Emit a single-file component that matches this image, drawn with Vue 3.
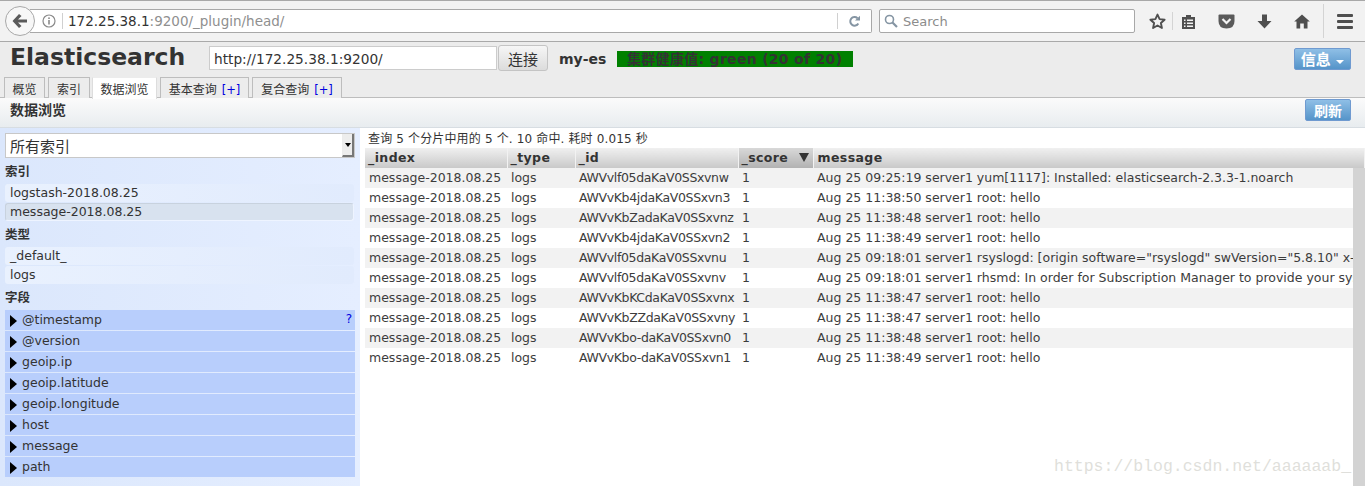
<script setup>
const tabs = [
  { label: '概览', w: 41 },
  { label: '索引', w: 42 },
  { label: '数据浏览', w: 65, active: true },
  { label: '基本查询', plus: true, w: 89 },
  { label: '复合查询', plus: true, w: 90 }
]
const fields = ['@timestamp', '@version', 'geoip.ip', 'geoip.latitude', 'geoip.longitude', 'host', 'message', 'path']
const rows = [
  ['AWVvlf05daKaV0SSxvnw', 'Aug 25 09:25:19 server1 yum[1117]: Installed: elasticsearch-2.3.3-1.noarch'],
  ['AWVvKb4jdaKaV0SSxvn3', 'Aug 25 11:38:50 server1 root: hello'],
  ['AWVvKbZadaKaV0SSxvnz', 'Aug 25 11:38:48 server1 root: hello'],
  ['AWVvKb4jdaKaV0SSxvn2', 'Aug 25 11:38:49 server1 root: hello'],
  ['AWVvlf05daKaV0SSxvnu', 'Aug 25 09:18:01 server1 rsyslogd: [origin software="rsyslogd" swVersion="5.8.10" x-pid="1117" x-info="http://www.rsyslog.com"] start'],
  ['AWVvlf05daKaV0SSxvnv', 'Aug 25 09:18:01 server1 rhsmd: In order for Subscription Manager to provide your system with updates'],
  ['AWVvKbKCdaKaV0SSxvnx', 'Aug 25 11:38:47 server1 root: hello'],
  ['AWVvKbZZdaKaV0SSxvny', 'Aug 25 11:38:47 server1 root: hello'],
  ['AWVvKbo-daKaV0SSxvn0', 'Aug 25 11:38:48 server1 root: hello'],
  ['AWVvKbo-daKaV0SSxvn1', 'Aug 25 11:38:49 server1 root: hello']
]
</script>

<template>
  <div class="page">
    <div class="chrome">
      <div class="back">
        <svg width="20" height="20" viewBox="0 0 20 20"><path d="M9 3 L2.5 10 L9 17 L11.5 15 L8 11.6 H17 V8.4 H8 L11.5 5 Z" fill="#5a5a5a"/></svg>
      </div>
      <div class="urlbar">
        <svg class="info" width="14" height="14" viewBox="0 0 14 14"><circle cx="7" cy="7" r="6" fill="none" stroke="#8a8a8a" stroke-width="1.2"/><rect x="6.2" y="6" width="1.6" height="4.5" fill="#8a8a8a"/><rect x="6.2" y="3.4" width="1.6" height="1.6" fill="#8a8a8a"/></svg>
        <span class="sep"></span>
        <span class="url"><span class="host">172.25.38.1</span>:9200/_plugin/head/</span>
        <span class="sep reload-sep"></span>
        <svg class="reload" width="13" height="13" viewBox="0 0 13 13"><path d="M10.3 8.5 A4.3 4.3 0 1 1 9.5 3.2" fill="none" stroke="#8595a3" stroke-width="2"/><path d="M7 5.5 H12 V0.8 Z" fill="#8595a3"/></svg>
      </div>
      <div class="searchbar">
        <svg width="14" height="14" viewBox="0 0 14 14"><circle cx="5.5" cy="5.5" r="4" fill="none" stroke="#8595a3" stroke-width="1.6"/><path d="M8.5 8.5 L13 13" stroke="#8595a3" stroke-width="2.2"/></svg>
        <span>Search</span>
      </div>
      <div class="tools">
        <svg class="t-star" width="17" height="17" viewBox="0 0 17 17"><path d="M8.5 1.6 L10.6 6.1 L15.6 6.7 L11.9 10 L12.9 15 L8.5 12.5 L4.1 15 L5.1 10 L1.4 6.7 L6.4 6.1 Z" fill="none" stroke="#4f4f4f" stroke-width="1.9" stroke-linejoin="round"/></svg>
        <span class="tool-sep"></span>
        <svg class="t-list" width="15" height="16" viewBox="0 0 15 16"><path d="M1 3 H5 V1 H10 V3 H14 V15 H1 Z" fill="#4f4f4f"/><path d="M3 5.5 H4.5 V7 H3 Z M6 5.5 H12 V7 H6 Z M3 8.5 H4.5 V10 H3 Z M6 8.5 H12 V10 H6 Z M3 11.5 H4.5 V13 H3 Z M6 11.5 H12 V13 H6 Z" fill="#f2f2f2"/></svg>
        <svg class="t-pocket" width="17" height="15" viewBox="0 0 17 15"><path d="M1.5 0.5 H15.5 Q16.5 0.5 16.5 1.5 V7 Q16.5 14.5 8.5 14.5 Q0.5 14.5 0.5 7 V1.5 Q0.5 0.5 1.5 0.5 Z" fill="#5a5a5a"/><path d="M4.5 5 L8.5 9 L12.5 5" fill="none" stroke="#f2f2f2" stroke-width="2.2"/></svg>
        <svg class="t-down" width="15" height="15" viewBox="0 0 15 15"><path d="M5 0.5 H10 V7 H14.5 L7.5 14.5 L0.5 7 H5 Z" fill="#4f4f4f"/></svg>
        <svg class="t-home" width="16" height="15" viewBox="0 0 16 15"><path d="M8 0.5 L15.8 7.5 H13.5 V14.5 H9.8 V9.5 H6.2 V14.5 H2.5 V7.5 H0.2 Z" fill="#4f4f4f"/></svg>
        <span class="tool-sep tall"></span>
        <div class="burger"><i></i><i></i><i></i></div>
      </div>
    </div>

    <div class="app-head">
      <div class="head-row">
        <h1>Elasticsearch</h1>
        <div class="conn">http://172.25.38.1:9200/</div>
        <button class="connect">连接</button>
        <span class="cluster">my-es</span>
        <span class="health">集群健康值: green (20 of 20)</span>
        <button class="blue info-btn">信息 <i class="caret"></i></button>
      </div>
      <div class="tabs">
        <div v-for="t in tabs" :key="t.label" class="tab" :class="{ active: t.active }" :style="{ width: t.w + 'px' }">
          {{ t.label }}<span v-if="t.plus" class="plus">[+]</span>
        </div>
      </div>
    </div>

    <div class="section">
      <strong>数据浏览</strong>
      <button class="blue refresh">刷新</button>
    </div>

    <div class="main">
      <aside class="side">
        <div class="select">
          <span>所有索引</span>
          <div class="arrow"><i></i></div>
        </div>
        <h3>索引</h3>
        <div class="item">logstash-2018.08.25</div>
        <div class="item sel">message-2018.08.25</div>
        <h3>类型</h3>
        <div class="item">_default_</div>
        <div class="item">logs</div>
        <h3>字段</h3>
        <div class="fields">
          <div v-for="(f, i) in fields" :key="f" class="field">
            <i class="tri"></i><span>{{ f }}</span>
            <b v-if="i === 0" class="q">?</b>
          </div>
        </div>
      </aside>

      <section class="results">
        <div class="summary">查询 5 个分片中用的 5 个. 10 命中. 耗时 0.015 秒</div>
        <table>
          <colgroup>
            <col class="c1"><col class="c2"><col class="c3"><col class="c4"><col>
          </colgroup>
          <thead>
            <tr>
              <th>_index</th><th>_type</th><th>_id</th>
              <th class="sorted">_score<i class="down"></i></th>
              <th class="last">message</th>
            </tr>
          </thead>
          <tbody>
            <tr v-for="r in rows" :key="r[0]">
              <td>message-2018.08.25</td><td>logs</td><td class="id">{{ r[0] }}</td><td>1</td>
              <td class="msg">{{ r[1] }}</td>
            </tr>
          </tbody>
        </table>
        <div class="scroll"></div>
        <div class="mark">https://blog.csdn.net/aaaaaab_</div>
      </section>
    </div>
  </div>
</template>

<style>
html, body { margin: 0; background: #fff; overflow: hidden; }
</style>

<style scoped>
.page {
  width: 1365px;
  height: 486px;
  overflow: hidden;
  font-family: "DejaVu Sans", "Noto Sans CJK SC", sans-serif;
  font-size: 12.5px;
  color: #333;
  display: flex;
  flex-direction: column;
}
.chrome {
  box-sizing: border-box;
  flex: none;
  background: #f2f2f2;
  border-top: 1px solid #a8a8a8;
  border-bottom: 1px solid #a9a9a9;
  height: 42px;
  display: flex;
  align-items: flex-start;
  padding: 8px 0 0 5px;
  position: relative;
}
.back {
  width: 30px;
  height: 30px;
  box-sizing: border-box;
  border: 1px solid #a8a8a8;
  border-radius: 50%;
  background: #f7f7f7;
  margin-top: -3px;
  display: flex;
  align-items: center;
  justify-content: center;
  position: relative;
  z-index: 1;
  flex: none;
}
.urlbar {
  margin-left: -5px;
  width: 842px;
  height: 24px;
  box-sizing: border-box;
  border: 1px solid #a8a8a8;
  border-left: none;
  border-radius: 0 2px 2px 0;
  background: #fff;
  display: flex;
  align-items: center;
  padding-left: 12px;
  flex: none;
}
.info { flex: none; }
.sep { width: 1px; height: 16px; background: #d0d0d0; margin-left: 6px; flex: none; }
.url { margin-left: 5px; font-size: 13.5px; color: #8f8f8f; white-space: nowrap; flex: 1; }
.host { color: #333; }
.reload-sep { margin: 0 10px 0 0; }
.reload { margin-right: 10px; flex: none; }
.searchbar {
  margin-left: 7px;
  width: 256px;
  height: 24px;
  box-sizing: border-box;
  border: 1px solid #a8a8a8;
  border-radius: 2px;
  background: #fff;
  display: flex;
  align-items: center;
  padding-left: 4px;
  gap: 5px;
  font-size: 13px;
  color: #8c8c8c;
  flex: none;
}
.tools { position: relative; flex: 1; height: 32px; }
.tools > * { position: absolute; }
.t-star { left: 14px; top: 4px; }
.tool-sep { left: 37px; top: 3px; width: 1px; height: 18px; background: #d4d4d4; }
.tool-sep.tall { left: 188px; top: -5px; height: 34px; }
.t-list { left: 46px; top: 5px; }
.t-pocket { left: 83px; top: 5px; }
.t-down { left: 122px; top: 5px; }
.t-home { left: 159px; top: 5px; }
.burger { left: 202px; top: 5px; width: 16px; display: flex; flex-direction: column; gap: 3px; }
.burger i { height: 3px; background: #4f4f4f; border-radius: 1px; }

.app-head {
  flex: none;
  height: 56px;
  box-sizing: border-box;
  background: #ececec;
  border-bottom: 1px solid #bdbdbd;
  position: relative;
}
.head-row {
  height: 35px;
  display: flex;
  align-items: flex-start;
  position: relative;
}
h1 {
  margin: 0 0 0 10px;
  width: 199px;
  font-size: 23.5px;
  line-height: 30px;
  font-weight: bold;
  color: #333;
  flex: none;
}
.conn {
  margin-top: 4px;
  width: 288px;
  height: 24px;
  box-sizing: border-box;
  border: 1px solid #ccc;
  background: #fff;
  padding-left: 4px;
  font-size: 13.7px;
  line-height: 25px;
  flex: none;
}
.connect {
  margin: 3px 0 0 1px;
  width: 50px;
  height: 26px;
  box-sizing: border-box;
  border: 1px solid #c4c4c4;
  border-radius: 3px;
  background: linear-gradient(#f6f6f6, #dcdcdc);
  padding: 0;
  font: 15px "Noto Sans CJK SC", sans-serif;
  color: #333;
  flex: none;
}
.cluster { margin: 9px 0 0 11px; width: 58px; font-weight: bold; font-size: 14px; line-height: 17px; flex: none; }
.health {
  margin-top: 9px;
  width: 226px;
  height: 16px;
  padding-left: 10px;
  background: #008000;
  font-size: 14px;
  line-height: 16px;
  font-weight: bold;
  letter-spacing: 0.3px;
  white-space: nowrap;
  flex: none;
}
.blue {
  border: 1px solid #6f9ad0;
  border-radius: 2px;
  background: linear-gradient(#8fbfe6, #5594c9);
  color: #fff;
  padding: 0;
  font-family: "Noto Sans CJK SC", sans-serif;
  font-weight: bold;
  box-sizing: border-box;
}
.info-btn {
  position: absolute;
  left: 1294px;
  top: 6px;
  width: 57px;
  height: 22px;
  font-size: 15px;
  line-height: 20px;
}
.caret {
  display: inline-block;
  margin-left: 2px;
  vertical-align: 1px;
  border: 4px solid transparent;
  border-top-color: #fff;
  border-bottom: none;
}
.tabs {
  display: flex;
  gap: 3px;
  padding-left: 4px;
  height: 21px;
  margin-bottom: -1px;
}
.tab {
  box-sizing: border-box;
  height: 21px;
  border: 1px solid #bdbdbd;
  border-bottom: none;
  background: #ececec;
  text-align: center;
  font-size: 12px;
  line-height: 22px;
  color: #333;
  white-space: nowrap;
  font-family: "Noto Sans CJK SC", sans-serif;
}
.tab.active { background: #fff; height: 22px; margin-left: -1px; border-color: #ececec; border-left: 1px solid #ddd; border-right: 1px solid #ddd; }
.plus { color: #0000e0; margin-left: 5px; font-family: "DejaVu Sans", sans-serif; font-size: 11.5px; }

.section {
  flex: none;
  height: 30px;
  box-sizing: border-box;
  background: linear-gradient(#fbfbfb, #e8ecef);
  border-bottom: 1px solid #d7dde2;
  padding: 3px 14px 0 10px;
  display: flex;
  justify-content: space-between;
  align-items: flex-start;
}
.section strong { font-size: 14px; line-height: 17px; font-family: "Noto Sans CJK SC", sans-serif; }
.refresh { margin-top: -2px; width: 46px; height: 22px; font-size: 14px; line-height: 20px; }

.main { flex: 1; display: flex; min-height: 0; }
.side {
  width: 360px;
  flex: none;
  box-sizing: border-box;
  padding: 5px 5px 0;
  background: linear-gradient(90deg, #dbe7fc, #e5eeff);
}
.select {
  width: 350px;
  height: 25px;
  margin-bottom: 1px;
  box-sizing: border-box;
  background: #fff;
  border: 1px solid #c8c8c8;
  display: flex;
  align-items: center;
  padding-left: 4px;
  font: 15px "Noto Sans CJK SC", sans-serif;
  justify-content: space-between;
}
.arrow {
  width: 12px;
  height: 23px;
  box-sizing: border-box;
  border-left: 1px solid #ececec;
  border-right: 2px solid #777;
  border-bottom: 2px solid #777;
  background: #ededed;
  display: flex;
  align-items: center;
  justify-content: center;
}
.arrow i { border: 3px solid transparent; border-top: 4px solid #000; border-bottom: none; }
h3 {
  margin: 0;
  height: 25px;
  font: bold 12.5px/23px "Noto Sans CJK SC", sans-serif;
  color: #333;
}
.item {
  height: 18px;
  margin-bottom: 1px;
  width: 349px;
  box-sizing: border-box;
  padding-left: 5px;
  line-height: 17px;
  font-size: 12.5px;
  border-radius: 3px;
  background: linear-gradient(90deg, #e9f1fe, #e1ebfd);
}
.item.sel {
  background: #d8e2ef;
  border: 1px solid #eef4ff;
  border-top-color: #c8d2de;
  border-left-color: #c8d2de;
  padding-left: 4px;
  line-height: 15px;
}
.fields { display: flex; flex-direction: column; gap: 1px; }
.field {
  height: 20px;
  width: 350px;
  background: #b8cefc;
  display: flex;
  align-items: center;
  position: relative;
  padding: 0 0 1px 5px;
  box-sizing: border-box;
  font-size: 12.5px;
}
.tri {
  border-left: 7px solid #000;
  border-top: 6px solid transparent;
  border-bottom: 6px solid transparent;
  margin-right: 5px;
  margin-top: 2px;
}
.q { position: absolute; right: 3px; top: 2px; color: #0000e0; font-size: 12px; font-weight: normal; }

.results { flex: 1; position: relative; min-width: 0; background: #fff; overflow: hidden; }
.summary {
  height: 20px;
  padding: 3px 0 0 8px;
  box-sizing: border-box;
  font-size: 12px;
  line-height: 17px;
  letter-spacing: 0.15px;
  white-space: nowrap;
}
table {
  margin-left: 5px;
  width: 1000px;
  table-layout: fixed;
  border-collapse: collapse;
}
.c1 { width: 142px; }
.c2 { width: 68px; }
.c3 { width: 163px; }
.c4 { width: 75px; }
th {
  height: 20px;
  padding: 0 0 2px 3px;
  box-sizing: border-box;
  text-align: left;
  font-size: 12.5px;
  font-weight: bold;
  letter-spacing: 0.4px;
  background: linear-gradient(#f0f0f0, #c9c9c9);
  border-right: 1px solid #f2f2f2;
  position: relative;
}
th.last { padding-left: 4px; }
th.sorted { background: linear-gradient(#d8d8d8, #b2b2b2); }
.down {
  position: absolute;
  right: 4px;
  top: 5px;
  border: 5px solid transparent;
  border-top: 9px solid #333;
  border-bottom: none;
}
td {
  height: 20px;
  padding: 0 0 1px 4px;
  box-sizing: border-box;
  font-size: 12.5px;
  line-height: 19px;
  white-space: nowrap;
  overflow: hidden;
  color: #3c3c3c;
}
td.id { letter-spacing: -0.35px; }
tbody tr:nth-child(odd) td { background: #f2f2f2; }
.scroll {
  position: absolute;
  left: 993px;
  top: 40px;
  bottom: 0;
  width: 12px;
  background: #d3d3d3;
}
.mark {
  position: absolute;
  left: 694px;
  top: 329px;
  font: 16.5px "Liberation Mono", monospace;
  color: #dfdfdb;
  white-space: nowrap;
  width: 299px;
  overflow: hidden;
}
</style>
